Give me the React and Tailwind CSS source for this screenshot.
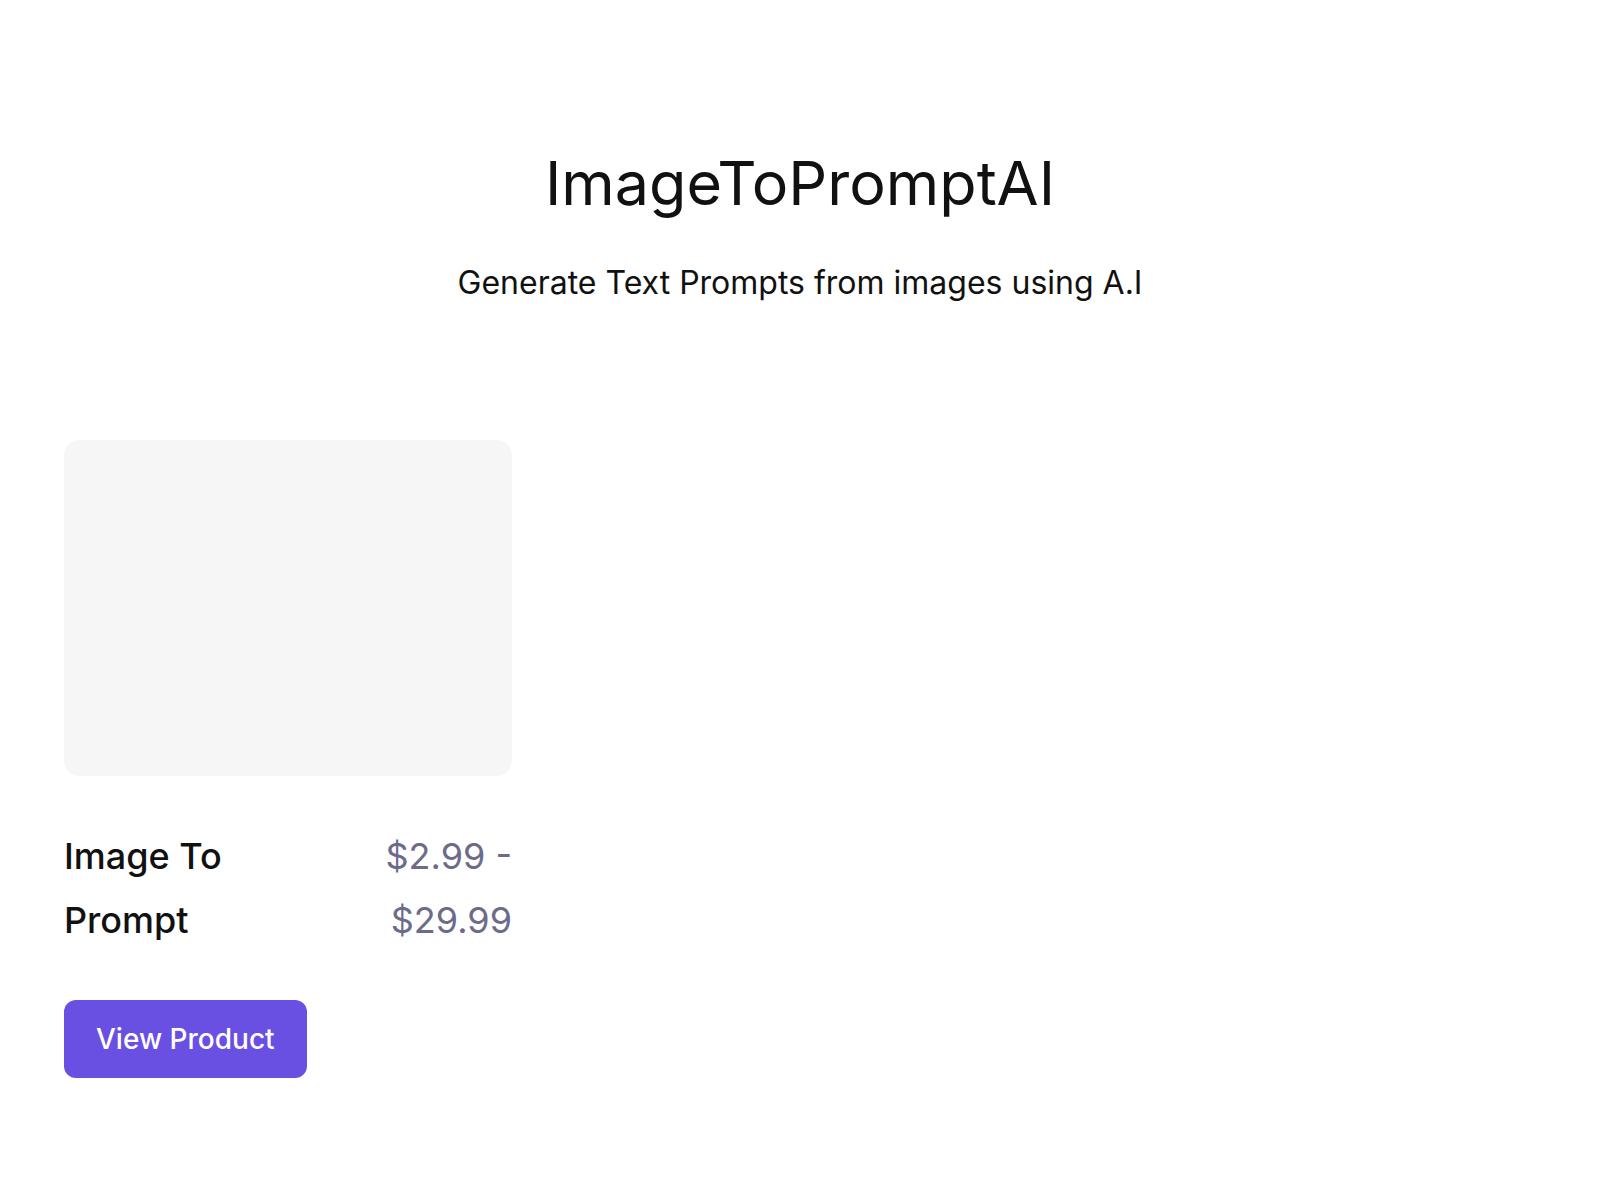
const products = [
  { name: 'Image To Prompt', price: '$2.99 - $29.99' },
]

function ProductCard({ name, price }) {
  return (
    <div className="flex flex-col">
      <div className="h-[336px] rounded-2xl bg-[#f6f6f6]" />
      <div className="mt-12 grid grid-cols-2 gap-4 text-[36px] leading-[64px]">
        <div className="font-medium text-[#111111]">{name}</div>
        <div className="text-right text-[#6c6b8a]">{price}</div>
      </div>
      <div className="mt-12">
        <button className="h-[78px] rounded-xl bg-[#6a4fe3] px-8 text-[28px] font-medium text-white">View Product</button>
      </div>
    </div>
  )
}

export default function App() {
  return (
    <div className="min-h-screen bg-white font-['Inter',sans-serif]">
      <header className="flex flex-col items-center pt-[143px] text-[#111111]">
        <h1 className="text-[61px] leading-[80px]">ImageToPromptAI</h1>
        <p className="mt-10 text-[32px] leading-[40px]">Generate Text Prompts from images using A.I</p>
      </header>
      <main className="grid grid-cols-3 gap-16 px-16 pt-[137px]">
        {products.map(p => <ProductCard key={p.name} {...p} />)}
      </main>
    </div>
  )
}
